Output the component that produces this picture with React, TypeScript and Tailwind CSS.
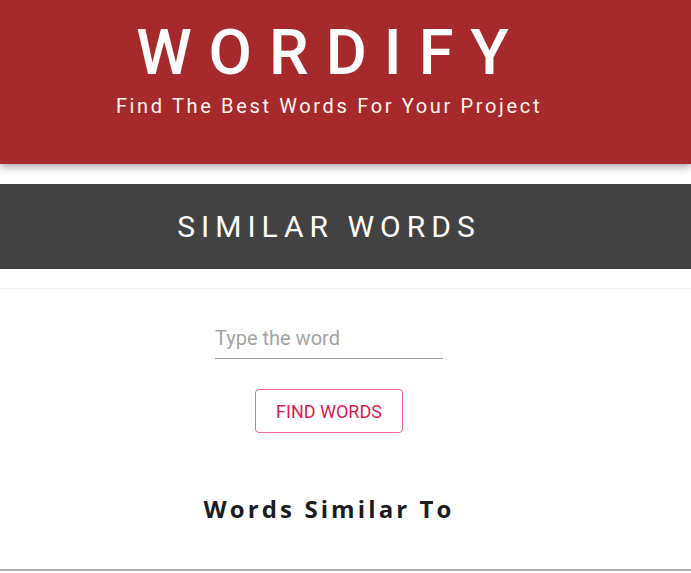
export default function App() {
  return (
    <div className="min-h-[573px] bg-white font-['Roboto',sans-serif]">
      <header className="h-[164px] bg-[#a6292b] shadow-[0_3px_8px_rgba(0,0,0,0.35)]">
        <div className="w-[658px] flex flex-col items-center pt-[18px]">
          <h1 className="text-[63px] leading-[70px] font-medium tracking-[17px] pl-[4px] text-white">
            WORDIFY
          </h1>
          <p className="mt-[5px] text-[20px] leading-[26px] tracking-[2.65px] text-[#fdf6f0]">
            Find The Best Words For Your Project
          </p>
        </div>
      </header>

      <section className="mt-[20px] h-[85px] bg-[#424242] flex items-center">
        <h2 className="w-[658px] text-center text-[30px] tracking-[6px] text-white">
          SIMILAR WORDS
        </h2>
      </section>

      <div className="mt-[19px] border-t border-[#f2f2f2]">
        <div className="w-[658px] flex flex-col items-center">
          <input
            type="text"
            placeholder="Type the word"
            className="mt-[32px] w-[228px] h-[38px] pb-[3px] border-b border-[#9e9e9e] text-[20px] text-[#333] placeholder:text-[#a3a3a3] outline-none"
          />
          <button className="mt-[30px] w-[148px] h-[44px] rounded-[4px] border border-[#ec6a92] text-[18px] text-[#dd1a55]">
            FIND WORDS
          </button>
          <h3 className="mt-[58px] font-['Open_Sans',sans-serif] font-bold text-[24px] tracking-[3.1px] text-[#1b1b22]">
            Words Similar To
          </h3>
        </div>
      </div>

      <div className="mt-[42px] border-b-2 border-[#adadad]" />
    </div>
  );
}
